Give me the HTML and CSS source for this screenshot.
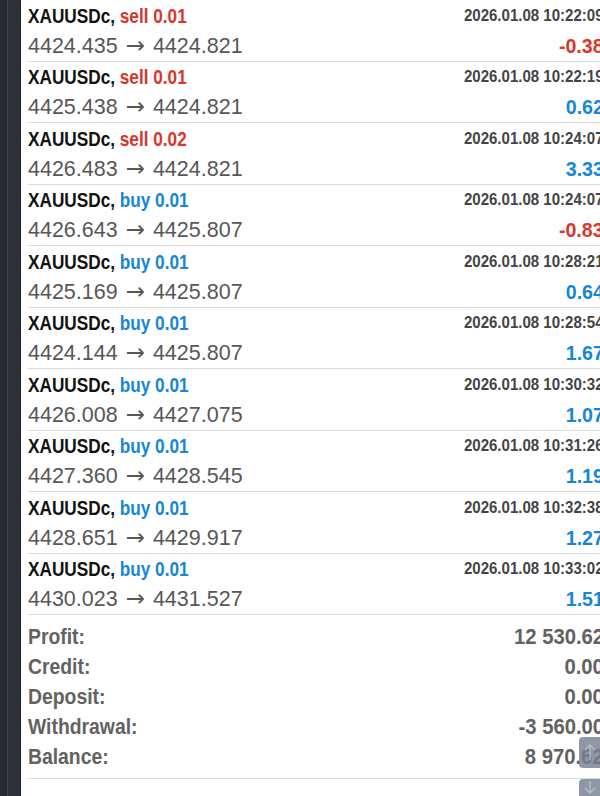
FILE: index.html
```html
<!DOCTYPE html>
<html>
<head>
<meta charset="utf-8">
<link rel="stylesheet" href="styles.css">
</head>
<body>
<div class="app">
  <div class="side"><div class="side-a"></div><div class="side-b"></div></div>
  <div class="main">
    <div class="list">
      <div class="row"><div class="l"><div class="t"><span class="cl">XAUUSDc, <span class="sell">sell 0.01</span></span></div><div class="p">4424.435 <span class="ar">→</span> 4424.821</div></div><div class="r"><div class="d"><span class="cr">2026.01.08 10:22:09</span></div><div class="v neg"><span class="cr">-0.38</span></div></div></div>
      <div class="row"><div class="l"><div class="t"><span class="cl">XAUUSDc, <span class="sell">sell 0.01</span></span></div><div class="p">4425.438 <span class="ar">→</span> 4424.821</div></div><div class="r"><div class="d"><span class="cr">2026.01.08 10:22:19</span></div><div class="v pos"><span class="cr">0.62</span></div></div></div>
      <div class="row"><div class="l"><div class="t"><span class="cl">XAUUSDc, <span class="sell">sell 0.02</span></span></div><div class="p">4426.483 <span class="ar">→</span> 4424.821</div></div><div class="r"><div class="d"><span class="cr">2026.01.08 10:24:07</span></div><div class="v pos"><span class="cr">3.33</span></div></div></div>
      <div class="row"><div class="l"><div class="t"><span class="cl">XAUUSDc, <span class="buy">buy 0.01</span></span></div><div class="p">4426.643 <span class="ar">→</span> 4425.807</div></div><div class="r"><div class="d"><span class="cr">2026.01.08 10:24:07</span></div><div class="v neg"><span class="cr">-0.83</span></div></div></div>
      <div class="row"><div class="l"><div class="t"><span class="cl">XAUUSDc, <span class="buy">buy 0.01</span></span></div><div class="p">4425.169 <span class="ar">→</span> 4425.807</div></div><div class="r"><div class="d"><span class="cr">2026.01.08 10:28:21</span></div><div class="v pos"><span class="cr">0.64</span></div></div></div>
      <div class="row"><div class="l"><div class="t"><span class="cl">XAUUSDc, <span class="buy">buy 0.01</span></span></div><div class="p">4424.144 <span class="ar">→</span> 4425.807</div></div><div class="r"><div class="d"><span class="cr">2026.01.08 10:28:54</span></div><div class="v pos"><span class="cr">1.67</span></div></div></div>
      <div class="row"><div class="l"><div class="t"><span class="cl">XAUUSDc, <span class="buy">buy 0.01</span></span></div><div class="p">4426.008 <span class="ar">→</span> 4427.075</div></div><div class="r"><div class="d"><span class="cr">2026.01.08 10:30:32</span></div><div class="v pos"><span class="cr">1.07</span></div></div></div>
      <div class="row"><div class="l"><div class="t"><span class="cl">XAUUSDc, <span class="buy">buy 0.01</span></span></div><div class="p">4427.360 <span class="ar">→</span> 4428.545</div></div><div class="r"><div class="d"><span class="cr">2026.01.08 10:31:26</span></div><div class="v pos"><span class="cr">1.19</span></div></div></div>
      <div class="row"><div class="l"><div class="t"><span class="cl">XAUUSDc, <span class="buy">buy 0.01</span></span></div><div class="p">4428.651 <span class="ar">→</span> 4429.917</div></div><div class="r"><div class="d"><span class="cr">2026.01.08 10:32:38</span></div><div class="v pos"><span class="cr">1.27</span></div></div></div>
      <div class="row"><div class="l"><div class="t"><span class="cl">XAUUSDc, <span class="buy">buy 0.01</span></span></div><div class="p">4430.023 <span class="ar">→</span> 4431.527</div></div><div class="r"><div class="d"><span class="cr">2026.01.08 10:33:02</span></div><div class="v pos"><span class="cr">1.51</span></div></div></div>
    </div>
    <div class="summary">
      <div class="srow"><span class="cl">Profit:</span><span class="cr">12 530.62</span></div>
      <div class="srow"><span class="cl">Credit:</span><span class="cr">0.00</span></div>
      <div class="srow"><span class="cl">Deposit:</span><span class="cr">0.00</span></div>
      <div class="srow"><span class="cl">Withdrawal:</span><span class="cr">-3 560.00</span></div>
      <div class="srow"><span class="cl">Balance:</span><span class="cr">8 970.62</span></div>
    </div>
  </div>
  <div class="scroll up"><svg width="22" height="31" viewBox="0 0 22 31"><path d="M11 8 V23 M6 13 L11 8 L16 13" fill="none" stroke="#b8bfcc" stroke-width="1.3"/></svg></div>
  <div class="scroll down"><svg width="22" height="20" viewBox="0 0 22 20"><path d="M11 2 V14 M6 9 L11 14 L16 9" fill="none" stroke="#b8bfcc" stroke-width="1.3"/></svg></div>
</div>
</body>
</html>
```
FILE: styles.css
```css
html, body {
  margin: 0;
  padding: 0;
  background: #fff;
  overflow: hidden;
}
.app {
  position: relative;
  width: 600px;
  height: 796px;
  display: flex;
  overflow: hidden;
  font-family: "Liberation Sans", Arial, sans-serif;
}
.side {
  width: 21px;
  flex: none;
  display: flex;
  background: #2b3039;
}
.side-a {
  width: 7px;
  background: #272a31;
  border-right: 1px solid #3e434c;
}
.side-b {
  flex: 1;
  background: #2c313a;
  border-right: 1px solid #1f2228;
}
.main {
  flex: none;
  width: 576px;
  margin-left: 7px;
  margin-right: -4px;
}
.cl, .cr {
  display: inline-block;
  white-space: nowrap;
  transform: scaleX(0.86);
}
.cl { transform-origin: left center; }
.cr { transform-origin: right center; }
.row {
  box-sizing: border-box;
  height: 61.5px;
  border-bottom: 1px solid #dcdcdc;
  display: flex;
  justify-content: space-between;
  padding-top: 0.5px;
}
.t {
  font-weight: bold;
  font-size: 20px;
  line-height: 30px;
  color: #111;
}
.sell { color: #d9362c; }
.buy { color: #1686d6; }
.p {
  font-size: 21.5px;
  line-height: 30px;
  color: #575757;
}
.ar {
  font-family: "DejaVu Sans", sans-serif;
  font-size: 23px;
  line-height: 20px;
  margin: 0 2px;
}
.r { text-align: right; }
.d {
  font-weight: bold;
  font-size: 16px;
  line-height: 30px;
  color: #444;
}
.d .cr { transform: scaleX(0.94); }
.v {
  font-weight: bold;
  font-size: 20px;
  line-height: 30px;
}
.v .cr { transform: scaleX(0.98); }
.neg { color: #d9362c; }
.pos { color: #1686d6; }
.summary {
  padding: 7px 0 6px;
  border-bottom: 1px solid #dcdcdc;
}
.srow {
  display: flex;
  justify-content: space-between;
  font-weight: bold;
  font-size: 22.5px;
  line-height: 30px;
  color: #626262;
}
.srow .cr { transform: scaleX(0.9); }
.scroll {
  position: absolute;
  left: 579px;
  width: 26px;
  border-radius: 4px;
  background: rgba(118, 128, 148, 0.82);
}
.up { top: 737px; height: 31px; }
.down { top: 779px; height: 26px; }
```
